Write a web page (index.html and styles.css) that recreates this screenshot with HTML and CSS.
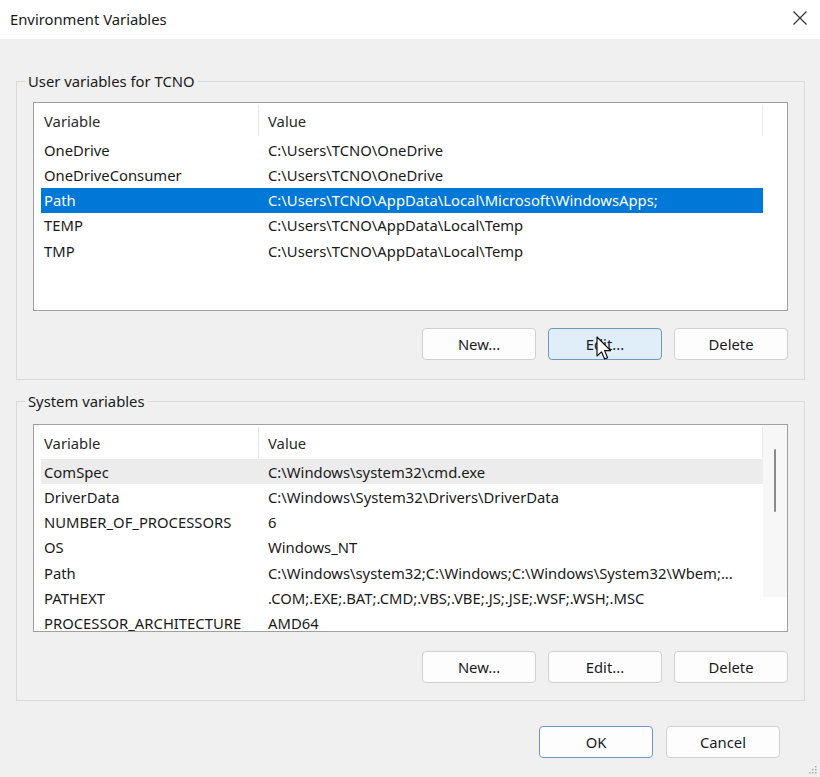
FILE: index.html
```html
<!DOCTYPE html>
<html>
<head>
<meta charset="utf-8">
<title>Environment Variables</title>
<link rel="stylesheet" href="styles.css">
</head>
<body>
<div class="window">
  <div class="titlebar">
    <span class="title">Environment Variables</span>
    <svg class="close" width="16" height="16" viewBox="0 0 16 16"><path d="M1.5 1.5 L14.5 14.5 M14.5 1.5 L1.5 14.5" stroke="#333" stroke-width="1.2" fill="none"/></svg>
  </div>
  <div class="body">
    <fieldset class="group group-user">
      <legend>User variables for TCNO</legend>
      <div class="list">
        <div class="row head">
          <div class="c1">Variable</div><div class="c2">Value</div><div class="c3"></div>
        </div>
        <div class="rows">
          <div class="row"><div class="c1">OneDrive</div><div class="c2">C:\Users\TCNO\OneDrive</div></div>
          <div class="row"><div class="c1">OneDriveConsumer</div><div class="c2">C:\Users\TCNO\OneDrive</div></div>
          <div class="row sel"><div class="c1">Path</div><div class="c2">C:\Users\TCNO\AppData\Local\Microsoft\WindowsApps;</div></div>
          <div class="row"><div class="c1">TEMP</div><div class="c2">C:\Users\TCNO\AppData\Local\Temp</div></div>
          <div class="row"><div class="c1">TMP</div><div class="c2">C:\Users\TCNO\AppData\Local\Temp</div></div>
        </div>
      </div>
      <div class="buttons">
        <button class="btn">New...</button>
        <button class="btn hover">Edit...
          <svg class="cursor" width="16" height="26" viewBox="0 0 16 26"><path d="M1 1 L1 20 L5.5 15.8 L8.6 23 L11.6 21.7 L8.6 14.6 L14.6 14.6 Z" fill="#fff" stroke="#000" stroke-width="1.1" stroke-linejoin="round"/></svg>
        </button>
        <button class="btn">Delete</button>
      </div>
    </fieldset>

    <fieldset class="group group-sys">
      <legend>System variables</legend>
      <div class="list sys">
        <div class="row head">
          <div class="c1">Variable</div><div class="c2">Value</div><div class="c3"></div>
        </div>
        <div class="sys-inner">
          <div class="rows">
            <div class="row hov"><div class="c1">ComSpec</div><div class="c2">C:\Windows\system32\cmd.exe</div></div>
            <div class="row"><div class="c1">DriverData</div><div class="c2">C:\Windows\System32\Drivers\DriverData</div></div>
            <div class="row"><div class="c1">NUMBER_OF_PROCESSORS</div><div class="c2">6</div></div>
            <div class="row"><div class="c1">OS</div><div class="c2">Windows_NT</div></div>
            <div class="row"><div class="c1">Path</div><div class="c2">C:\Windows\system32;C:\Windows;C:\Windows\System32\Wbem;...</div></div>
            <div class="row"><div class="c1">PATHEXT</div><div class="c2">.COM;.EXE;.BAT;.CMD;.VBS;.VBE;.JS;.JSE;.WSF;.WSH;.MSC</div></div>
            <div class="row"><div class="c1">PROCESSOR_ARCHITECTURE</div><div class="c2">AMD64</div></div>
          </div>
          <div class="scrollbar"><div class="thumb"></div></div>
        </div>
      </div>
      <div class="buttons">
        <button class="btn">New...</button>
        <button class="btn">Edit...</button>
        <button class="btn">Delete</button>
      </div>
    </fieldset>

    <div class="footer">
      <button class="btn default">OK</button>
      <button class="btn">Cancel</button>
    </div>
    <svg class="grip" width="10" height="10" viewBox="0 0 10 10">
      <rect x="8" y="2" width="1.5" height="1.5" fill="#aaa"/>
      <rect x="5" y="5" width="1.5" height="1.5" fill="#aaa"/>
      <rect x="8" y="5" width="1.5" height="1.5" fill="#aaa"/>
      <rect x="2" y="8" width="1.5" height="1.5" fill="#aaa"/>
      <rect x="5" y="8" width="1.5" height="1.5" fill="#aaa"/>
      <rect x="8" y="8" width="1.5" height="1.5" fill="#aaa"/>
    </svg>
  </div>
</div>
</body>
</html>
```
FILE: styles.css
```css
* { box-sizing: border-box; }
html, body { margin: 0; padding: 0; }
body {
  width: 820px;
  height: 777px;
  overflow: hidden;
  font-family: "Noto Sans", "Liberation Sans", sans-serif;
  font-size: 14.8px;
  color: #1a1a1a;
  background: #f0f0f0;
}
.window { width: 820px; height: 777px; display: flex; flex-direction: column; }
.titlebar {
  height: 39px;
  background: #fff;
  display: flex;
  align-items: center;
  justify-content: space-between;
  padding: 0 12px 0 10px;
}
.title { font-size: 14.8px; color: #1a1a1a; margin-top: -2px; }
.close { display: block; margin-top: -3px; }
.body {
  flex: 1;
  position: relative;
  padding: 33px 0 0 16px;
}
.group {
  width: 789px;
  margin: 0;
  border: 1px solid #dadada;
  padding: 12px 16px 19px 16px;
  min-width: 0;
}
.group legend {
  padding: 0 3px;
  margin-left: -8px;
  line-height: 18px;
  color: #1a1a1a;
}
.group-sys { margin-top: 12px; padding-top: 14px; padding-bottom: 17px; }
.list {
  height: 209px;
  background: #fff;
  border: 1px solid #a0a0a0;
  padding: 0 24px 0 7px;
  overflow: hidden;
}
.list.sys { height: 208px; }
.row { display: flex; height: 25.25px; align-items: center; white-space: nowrap; }
.row .c1 { width: 224px; padding-left: 3px; flex: none; }
.row .c2 { flex: 1; padding-left: 3px; overflow: hidden; }
.row.head { height: 34px; color: #2a2a2a; position: relative; align-items: flex-start; }
.row.head .c1 { height: 31px; display: flex; align-items: center; border-right: 1px solid #e5e5e5; width: 218px; margin-top: 2px; }
.row.head .c2 { padding-left: 9px; height: 31px; display: flex; align-items: center; border-right: 1px solid #ececec; margin-top: 2px; }
.row.head .c3 { display: none; }
.row.sel { background: #0078d7; color: #fff; }
.row.hov { background: #ececec; }
.list.sys { padding-right: 0; }
.sys-inner { display: flex; }
.sys-inner .rows { flex: 1; }
.list.sys .row.head { margin-right: 24px; }
.scrollbar {
  width: 24px;
  height: 172px;
  margin-top: -34px;
  background: #f7f7f7;
  position: relative;
  flex: none;
}
.thumb {
  position: absolute;
  left: 11px;
  top: 24px;
  width: 2px;
  height: 63px;
  background: #8a8a8a;
  border-radius: 1px;
}
.buttons {
  display: flex;
  justify-content: flex-end;
  gap: 12px;
  margin-top: 17px;
}
.group-sys .buttons { margin-top: 19px; }
.btn {
  width: 114px;
  height: 32px;
  font-family: inherit;
  font-size: 14.8px;
  color: #1a1a1a;
  background: #fdfdfd;
  border: 1px solid #d0d0d0;
  border-radius: 4px;
  padding: 0;
  position: relative;
}
.btn.hover { background: #e0eef9; border-color: #6f96c6; }
.btn.default { border-color: #6f96c6; }
.cursor { position: absolute; left: 47px; top: 7px; }
.footer {
  display: flex;
  justify-content: flex-end;
  gap: 13px;
  width: 764px;
  margin-top: 25px;
}
.grip { position: absolute; right: 3px; bottom: 3px; }
```
